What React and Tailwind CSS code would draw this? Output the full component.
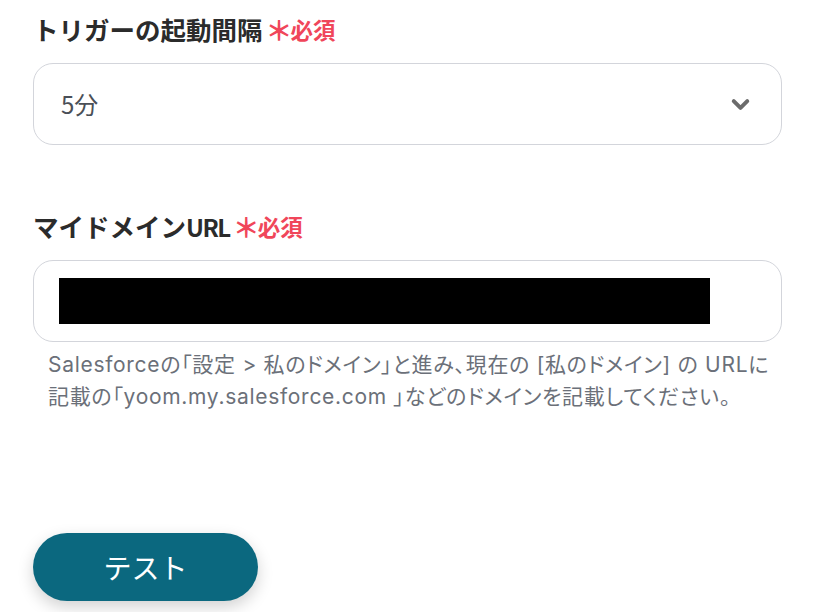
import { ChevronDown } from 'lucide-react';

const font = { fontFamily: '"Noto Sans CJK JP", "Noto Sans", sans-serif' };

const Label = ({ children }) => (
  <div className="flex items-center h-[50px]">
    <span className="text-[25.5px] font-bold text-[#2b2b2b] leading-none">{children}</span>
    <span className="flex items-center ml-[3px] text-[#f0465a] font-bold leading-none">
      <span className="text-[27px] font-bold">＊</span>
      <span className="text-[22.5px] -ml-[2px]">必須</span>
    </span>
  </div>
);

const App = () => {
  return (
    <div className="w-[826px] h-[612px] bg-white overflow-hidden" style={font}>
      <div className="pl-[33px] pr-[44px] pt-[4px]">
        <Label>トリガーの起動間隔</Label>
        <div className="mt-[9px] h-[82px] border border-[#d3d5db] rounded-[20px] flex items-center justify-between pl-[27px] pr-[27px]">
          <span className="text-[24px] text-[#4a4f57]">5分</span>
          <ChevronDown className="w-[27px] h-[27px] text-[#6b6b6b]" strokeWidth={3.5} />
        </div>

        <div className="mt-[56px]">
          <Label>
            マイドメイン<span className="text-[24px] tracking-[-1.5px]">URL</span>
          </Label>
        </div>
        <div className="mt-[9px] h-[82px] border border-[#d3d5db] rounded-[20px] flex items-center pl-[25px]">
          <div className="w-[651px] h-[46px] bg-black" />
        </div>
        <p
          className="mt-[7px] pl-[15px] text-[21px] leading-[32px] text-[#6b7079] [font-feature-settings:'palt'] tracking-[0.7px] whitespace-nowrap"
          style={{ fontFamily: 'Inter, "Noto Sans CJK JP", sans-serif' }}
        >
          Salesforceの「設定 &gt; 私のドメイン」と進み、現在の [私のドメイン] の URLに
          <br />
          記載の「yoom.my.salesforce.com 」などのドメインを記載してください。
        </p>

        <button className="mt-[120px] w-[225px] h-[68px] rounded-full bg-[#0b687f] text-white text-[28px] shadow-[0_6px_16px_rgba(0,0,0,0.18)]">
          テスト
        </button>
      </div>
    </div>
  );
};

export default App;
